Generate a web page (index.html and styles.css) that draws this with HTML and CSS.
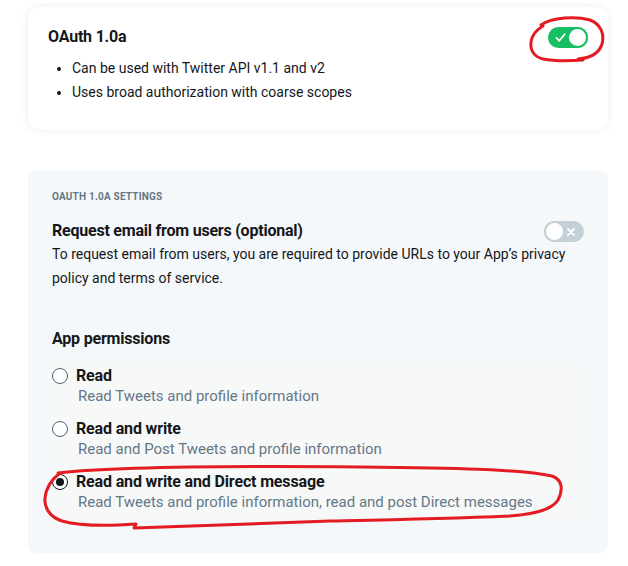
FILE: index.html
```html
<!DOCTYPE html>
<html lang="en">
<head>
<meta charset="utf-8">
<title>OAuth 1.0a</title>
<link rel="stylesheet" href="styles.css">
</head>
<body>
<div class="page">
  <section class="card">
    <div class="card-head">
      <h2 class="card-title">OAuth 1.0a</h2>
      <span class="toggle toggle-on">
        <svg class="toggle-icon" width="11" height="11" viewBox="0 0 10 10"><path d="M1.3 5.4 L3.9 8 L8.8 2" fill="none" stroke="#fff" stroke-width="1.6" stroke-linecap="round" stroke-linejoin="round"/></svg>
        <span class="knob"></span>
      </span>
    </div>
    <ul class="bullets">
      <li>Can be used with Twitter API v1.1 and v2</li>
      <li>Uses broad authorization with coarse scopes</li>
    </ul>
  </section>

  <section class="settings">
    <div class="eyebrow">OAUTH 1.0A SETTINGS</div>
    <div class="row">
      <h3 class="row-title">Request email from users (optional)</h3>
      <span class="toggle toggle-off">
        <span class="knob"></span>
        <svg class="toggle-icon" width="10" height="10" viewBox="0 0 10 10"><path d="M2 2 L8 8 M8 2 L2 8" fill="none" stroke="#fff" stroke-width="1.8" stroke-linecap="round"/></svg>
      </span>
    </div>
    <p class="body-text">To request email from users, you are required to provide URLs to your App’s privacy policy and terms of service.</p>

    <h3 class="section-title">App permissions</h3>
    <div class="options">
      <label class="option">
        <span class="radio"></span>
        <span class="option-text">
          <span class="option-title">Read</span>
          <span class="option-desc">Read Tweets and profile information</span>
        </span>
      </label>
      <label class="option">
        <span class="radio"></span>
        <span class="option-text">
          <span class="option-title">Read and write</span>
          <span class="option-desc">Read and Post Tweets and profile information</span>
        </span>
      </label>
      <label class="option">
        <span class="radio radio-checked"></span>
        <span class="option-text">
          <span class="option-title">Read and write and Direct message</span>
          <span class="option-desc">Read Tweets and profile information, read and post Direct messages</span>
        </span>
      </label>
    </div>
  </section>
</div>

<svg class="annotations" width="628" height="566" viewBox="0 0 628 566">
  <path d="M541 25 C552 17 576 16 590 20 C600 24 605 33 602 44 C599 54 590 58 578 59 L583 60 C570 61 553 61 543 59 C534 57 530 50 531 42 C532 35 536 30 543 26" fill="none" stroke="#e31b23" stroke-width="3" stroke-linecap="round" stroke-linejoin="round"/>
  <path d="M58 473 C120 466 250 466 360 467 C450 468 520 469 552 476 C563 480 563 490 558 500 C552 509 538 514 510 516 C440 519 380 520 330 521 L134 528 L136 524 C110 526 80 526 62 521 C50 517 44 508 45 498 C46 487 51 480 60 473" fill="none" stroke="#e31b23" stroke-width="3" stroke-linecap="round" stroke-linejoin="round"/>
</svg>
</body>
</html>
```

FILE: styles.css
```css
* {
  box-sizing: border-box;
}

html, body {
  margin: 0;
  padding: 0;
  background: #ffffff;
}

body {
  font-family: Roboto, "Liberation Sans", sans-serif;
  color: #14171a;
  position: relative;
  width: 628px;
  height: 566px;
  overflow: hidden;
}

.page {
  padding: 7px 20px 0 28px;
  width: 628px;
}

.card {
  width: 580px;
  height: 123px;
  background: #ffffff;
  border-radius: 12px;
  box-shadow: 0 0 10px rgba(20, 23, 26, 0.07);
  padding: 20px 20px 0 20px;
}

.card-head {
  display: flex;
  justify-content: space-between;
  align-items: flex-start;
  height: 21px;
}

.card-title {
  margin: 0;
  font-size: 16px;
  line-height: 20px;
  font-weight: 700;
  letter-spacing: -0.2px;
}

.toggle {
  display: flex;
  align-items: center;
  width: 40px;
  height: 21px;
  border-radius: 11px;
}

.toggle-on {
  background: #17bf63;
  justify-content: space-between;
  padding: 0 0 0 7px;
}

.toggle-on .knob {
  width: 21px;
  height: 21px;
  border-radius: 50%;
  background: #ffffff;
  border: 2px solid #17bf63;
}

.toggle-off {
  background: #c4cfd6;
  justify-content: space-between;
  padding: 0 8px 0 0;
}

.toggle-off .knob {
  width: 21px;
  height: 21px;
  border-radius: 50%;
  background: #ffffff;
  border: 2px solid #c4cfd6;
}

.toggle-icon {
  display: block;
}

.bullets {
  margin: 8px 0 0 0;
  padding: 0 0 0 24px;
  font-size: 14px;
  line-height: 24px;
  color: #14171a;
}

.settings {
  margin-top: 41px;
  width: 580px;
  height: 382px;
  background: #f5f8fa;
  border-radius: 8px;
  padding: 20px 24px 0 24px;
}

.eyebrow {
  font-size: 10px;
  line-height: 12px;
  font-weight: 700;
  color: #657786;
  letter-spacing: 0.2px;
}

.row {
  margin-top: 18px;
  display: flex;
  justify-content: space-between;
  align-items: flex-start;
  height: 21px;
}

.row-title {
  margin: 0;
  font-size: 16px;
  line-height: 20px;
  font-weight: 700;
  letter-spacing: -0.22px;
}

.body-text {
  margin: 0;
  font-size: 14px;
  line-height: 24px;
  color: #14171a;
}

.section-title {
  margin: 39px 0 0 0;
  font-size: 16px;
  line-height: 20px;
  font-weight: 700;
  letter-spacing: -0.2px;
}

.options {
  margin-top: 14px;
  background: #f7f9f9;
  padding: 3px 0 10px 0;
  display: flex;
  flex-direction: column;
  gap: 13px;
}

.option {
  display: flex;
  align-items: flex-start;
  gap: 8px;
}

.radio {
  flex: none;
  width: 16px;
  height: 16px;
  margin-top: 2px;
  border-radius: 50%;
  border: 1.5px solid #536471;
  background: #ffffff;
  position: relative;
}

.radio-checked {
  border-color: #14171a;
}

.radio-checked::after {
  content: "";
  position: absolute;
  left: 2.5px;
  top: 2.5px;
  width: 8px;
  height: 8px;
  border-radius: 50%;
  background: #14171a;
}

.option-text {
  display: flex;
  flex-direction: column;
}

.option-title {
  font-size: 16px;
  line-height: 20px;
  font-weight: 700;
  letter-spacing: -0.15px;
}

.option-desc {
  font-size: 15px;
  line-height: 20px;
  color: #657786;
  padding-left: 2px;
}

.annotations {
  position: absolute;
  left: 0;
  top: 0;
  pointer-events: none;
}
```
